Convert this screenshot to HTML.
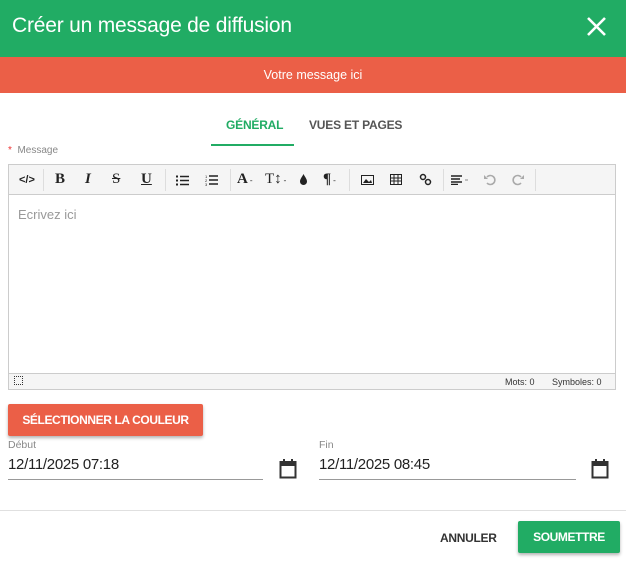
<!DOCTYPE html>
<html><head><meta charset="utf-8"><style>
*{box-sizing:border-box;margin:0;padding:0}
body{width:626px;height:563px;background:#fff;font-family:"Liberation Sans",sans-serif;position:relative;overflow:hidden;color:#333}
.a{position:absolute}
.hdr{left:0;top:0;width:626px;height:57px;background:#21ac64;color:#fff;font-size:21px;line-height:52px;padding-left:12px;letter-spacing:-0.2px}
.red{left:0;top:57px;width:626px;height:36px;background:#eb5f47;color:#fff;font-size:12.5px;line-height:36px;text-align:center}
.tab{font-size:12px;font-weight:bold;top:118px;letter-spacing:-0.2px}
.tb{left:8px;top:164px;width:608px;height:226px;border:1px solid #ccc}
.bar{left:0;top:0;width:606px;height:30px;background:#f5f5f5;border-bottom:1px solid #ccc}
.ic{position:absolute;top:6px;font-size:15px;color:#222;font-family:"Liberation Serif",serif;font-weight:bold}
.sep{position:absolute;top:4px;width:1px;height:22px;background:#ddd}
.st{left:0;top:208px;width:606px;height:16px;background:#f5f5f5;border-top:1px solid #ccc;font-size:9px;color:#333}
.btn{color:#fff;font-size:12px;font-weight:bold;text-align:center;border-radius:2px;box-shadow:0 2px 3px rgba(0,0,0,.3);letter-spacing:-0.4px}
.lbl{font-size:10.5px;color:#888}
.val{font-size:15px;color:#222;letter-spacing:-0.3px}
.ul{height:1px;background:#999}
</style></head><body>
<div class="a hdr">Créer un message de diffusion</div>
<svg class="a" style="left:586px;top:16px" width="21" height="21" viewBox="0 0 21 21"><path d="M2 2L19 19M19 2L2 19" stroke="#fff" stroke-width="2.6"/></svg>
<div class="a red">Votre message ici</div>
<div class="a tab" style="left:226px;color:#21ac64">GÉNÉRAL</div>
<div class="a tab" style="left:309px;color:#555">VUES ET PAGES</div>
<div class="a" style="left:211px;top:144px;width:83px;height:2px;background:#21ac64"></div>
<div class="a lbl" style="left:8px;top:145px;font-size:10px"><span style="color:#e33">*</span>&nbsp; Message</div>
<div class="a tb">
 <div class="a bar">
  <span class="ic" style="left:10px;font-family:'Liberation Sans';font-size:11px;top:9px">&lt;/&gt;</span>
  <div class="sep" style="left:34px"></div>
  <span class="ic" style="left:46px">B</span>
  <span class="ic" style="left:76px;font-style:italic">I</span>
  <span class="ic" style="left:103px;text-decoration:line-through;font-weight:normal">S</span>
  <span class="ic" style="left:132px;text-decoration:underline">U</span>
  <div class="sep" style="left:156px"></div>
  <svg class="a" style="left:167px;top:10px" width="13" height="11"><path d="M0 1.5H2M0 5.5H2M0 9.5H2" stroke="#222" stroke-width="2"/><path d="M4 1.5H13M4 5.5H13M4 9.5H13" stroke="#222" stroke-width="1.6"/></svg>
  <svg class="a" style="left:196px;top:9px" width="13" height="12"><text x="0" y="4" font-size="4" fill="#222">1</text><text x="0" y="8" font-size="4" fill="#222">2</text><text x="0" y="12" font-size="4" fill="#222">3</text><path d="M4 2H13M4 6H13M4 10H13" stroke="#222" stroke-width="1.6"/></svg>
  <div class="sep" style="left:221px"></div>
  <span class="ic" style="left:228px">A<small style="font-size:8px;font-weight:normal"> -</small></span>
  <span class="ic" style="left:256px;font-weight:normal">T↕<small style="font-size:8px"> -</small></span>
  <svg class="a" style="left:290px;top:9px" width="9" height="12"><path d="M4.5 0C3 3 1 5 1 7.5A3.5 3.5 0 0 0 8 7.5C8 5 6 3 4.5 0Z" fill="#222"/></svg>
  <span class="ic" style="left:314px">¶<small style="font-size:8px;font-weight:normal"> -</small></span>
  <div class="sep" style="left:340px"></div>
  <svg class="a" style="left:352px;top:10px" width="13" height="10"><rect x=".5" y=".5" width="12" height="9" fill="none" stroke="#222"/><path d="M2 8L5 4L8 7L10 5L11 8Z" fill="#222"/></svg>
  <svg class="a" style="left:381px;top:9px" width="12" height="11"><rect x=".5" y=".5" width="11" height="10" fill="none" stroke="#222"/><path d="M0 4H12M0 7H12M4 0V11M8 0V11" stroke="#222"/></svg>
  <svg class="a" style="left:410px;top:8px" width="13" height="13"><circle cx="4" cy="4" r="2.5" fill="none" stroke="#222" stroke-width="1.5"/><circle cx="9" cy="9" r="2.5" fill="none" stroke="#222" stroke-width="1.5"/></svg>
  <div class="sep" style="left:434px"></div>
  <svg class="a" style="left:442px;top:10px" width="18" height="10"><path d="M0 1H11M0 4H9M0 7H11M0 9.5H7" stroke="#222" stroke-width="1.4"/><path d="M14 5H17" stroke="#888"/></svg>
  <svg class="a" style="left:475px;top:8px" width="12" height="13"><path d="M3 4A4.5 4.5 0 1 1 3 10" fill="none" stroke="#aaa" stroke-width="1.6"/><path d="M0 2V6H4Z" fill="#aaa"/></svg>
  <svg class="a" style="left:503px;top:8px" width="12" height="13"><path d="M9 4A4.5 4.5 0 1 0 9 10" fill="none" stroke="#aaa" stroke-width="1.6"/><path d="M12 2V6H8Z" fill="#aaa"/></svg>
  <div class="sep" style="left:526px"></div>
 </div>
 <div class="a" style="left:9px;top:42px;font-size:13px;color:#999">Ecrivez ici</div>
 <div class="a st"><span class="a" style="left:5px;top:2px;width:9px;height:9px;border:1px dotted #333"></span><span class="a" style="left:496px;top:3px">Mots: 0</span><span class="a" style="left:543px;top:3px">Symboles: 0</span></div>
</div>
<div class="a btn" style="left:8px;top:404px;width:195px;height:32px;line-height:32px;background:#eb5f47">SÉLECTIONNER LA COULEUR</div>
<div class="a lbl" style="left:8px;top:439px">Début</div>
<div class="a val" style="left:8px;top:456px">12/11/2025 07:18</div>
<div class="a ul" style="left:8px;top:479px;width:255px"></div>
<div class="a lbl" style="left:319px;top:439px">Fin</div>
<div class="a val" style="left:319px;top:456px">12/11/2025 08:45</div>
<div class="a ul" style="left:319px;top:479px;width:257px"></div>
<svg class="a" style="left:279px;top:459px" width="18" height="20"><rect x="1.5" y="3" width="15" height="15.5" fill="none" stroke="#333" stroke-width="2"/><rect x="1.5" y="3" width="15" height="4" fill="#333"/><path d="M5 0V4M13 0V4" stroke="#333" stroke-width="2"/></svg>
<svg class="a" style="left:591px;top:459px" width="18" height="20"><rect x="1.5" y="3" width="15" height="15.5" fill="none" stroke="#333" stroke-width="2"/><rect x="1.5" y="3" width="15" height="4" fill="#333"/><path d="M5 0V4M13 0V4" stroke="#333" stroke-width="2"/></svg>
<div class="a" style="left:0;top:510px;width:626px;height:1px;background:#e0e0e0"></div>
<div class="a" style="left:440px;top:531px;font-size:12px;font-weight:bold;color:#333;letter-spacing:-0.3px">ANNULER</div>
<div class="a btn" style="left:518px;top:521px;width:102px;height:32px;line-height:32px;background:#21ac64">SOUMETTRE</div>
</body></html>
